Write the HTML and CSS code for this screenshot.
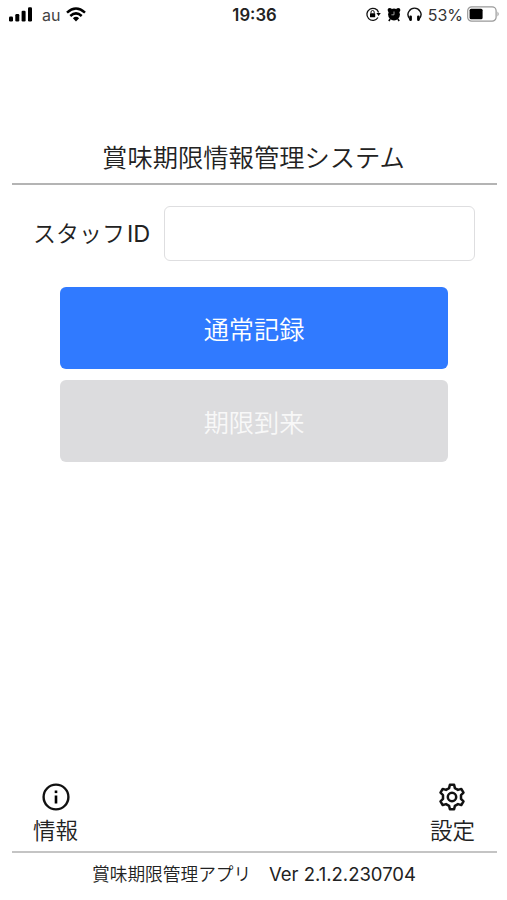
FILE: index.html
```html
<!DOCTYPE html>
<html lang="ja">
<head>
<meta charset="utf-8">
<title>賞味期限情報管理システム</title>
<link rel="stylesheet" href="styles.css">
</head>
<body>
<div class="screen">
  <header class="status">
    <div class="status-left">
      <svg class="signal" viewBox="0 0 24 15" width="24" height="15"><rect x="0" y="9.5" width="4" height="5" rx="1.2"/><rect x="6.3" y="7" width="4" height="7.5" rx="1.2"/><rect x="12.6" y="3.8" width="4" height="10.7" rx="1.2"/><rect x="19" y="0.3" width="4" height="14.2" rx="1.2"/></svg>
      <span class="carrier">au</span>
      <svg class="wifi" viewBox="0 0 20 15" width="20" height="15"><g fill="none" stroke="#000" stroke-width="2.5"><path d="M1 5.6Q10-2.6 19 5.6"/><path d="M4.3 9Q10 3.8 15.7 9"/></g><path d="M6.9 11.2Q10 8.5 13.1 11.2L10 14.5Z"/></svg>
    </div>
    <div class="clock">19:36</div>
    <div class="status-right">
      <svg viewBox="0 0 16 16" width="16" height="16"><path d="M13 11.5A6 6 0 1 1 13.6 6.5" fill="none" stroke="#111" stroke-width="1.3"/><path d="M11.4 7.1h4.4l-2.2 3z"/><rect x="5" y="7.2" width="5.2" height="4" rx=".5"/><path d="M6 7.5V6.1a1.6 1.6 0 0 1 3.2 0v1.4" fill="none" stroke="#111" stroke-width="1"/></svg>
      <svg viewBox="0 0 14 15" width="14" height="15"><circle cx="7" cy="7.5" r="5.9"/><circle cx="2.8" cy="3.1" r="2.2"/><circle cx="11.2" cy="3.1" r="2.2"/><path d="M3.2 12l-1.4 2M10.8 12l1.4 2" stroke="#000" stroke-width="1.5"/><path d="M7 4.5v3.3H4.4" fill="none" stroke="#aaa" stroke-width=".9"/></svg>
      <svg viewBox="0 0 15 15" width="15" height="15"><path d="M3.2 12.6C.5 9.6.6 6.2 2.1 4.1a6.4 6.4 0 0 1 10.8 0c1.5 2.1 1.6 5.5-1.1 8.5" fill="none" stroke="#111" stroke-width="1.4"/><rect x="2.3" y="8.5" width="2.6" height="5.5" rx="1.2"/><rect x="10.1" y="8.5" width="2.6" height="5.5" rx="1.2"/></svg>
      <span class="percent">53%</span>
      <svg class="battery" viewBox="0 0 33 16" width="33" height="16"><rect x=".7" y=".8" width="28.4" height="14.4" rx="4" fill="none" stroke="#999" stroke-width="1.2"/><rect x="2.6" y="2.8" width="13" height="10.4" rx="1.5"/><path d="M30.5 5.5q2.4 2.5 0 5z" fill="#999"/></svg>
    </div>
  </header>
  <h1 class="title">賞味期限情報管理システム</h1>
  <main class="form">
    <div class="field">
      <label for="staff">スタッフ<span class="latin">ID</span></label>
      <input id="staff" type="text">
    </div>
    <button class="action primary">通常記録</button>
    <button class="action disabled" disabled>期限到来</button>
  </main>
  <nav class="tools">
    <a class="tool"><svg viewBox="0 0 28 28" width="28" height="28"><circle cx="14" cy="14" r="12.4" fill="none" stroke="#111" stroke-width="2.4"/><rect x="12.7" y="12.5" width="2.6" height="8"/><rect x="12.7" y="7.5" width="2.6" height="2.6"/></svg><span>情報</span></a>
    <a class="tool"><svg viewBox="0 0 28 28" width="28" height="28"><g fill="none" stroke="#111" stroke-width="2.5" stroke-linejoin="round"><path d="M11.9 1.8h4.2l.8 3.3 3.1 1.8 3.3-1 2.2 3.8-2.5 2.4v3.8l2.5 2.4-2.2 3.8-3.3-1-3.1 1.8-.8 3.3h-4.2l-.8-3.3L8 21.1l-3.3 1-2.2-3.8L5 15.9v-3.8L2.5 9.7l2.2-3.8 3.3 1 3.1-1.8z"/><circle cx="14" cy="14" r="4.2"/></g></svg><span>設定</span></a>
  </nav>
  <footer class="footer">賞味期限管理アプリ　<span class="version">Ver 2.1.2.230704</span></footer>
</div>
</body>
</html>
```
FILE: styles.css
```css
* { box-sizing: border-box; }
body {
  margin: 0;
  background: #fff;
  color: #222;
  font-family: "Noto Sans CJK JP", sans-serif;
  font-weight: 350;
}
.screen {
  display: flex;
  flex-direction: column;
  height: 900px;
  padding: 0 11px 0 12px;
}
.status {
  display: grid;
  grid-template-columns: 1fr auto 1fr;
  align-items: center;
  height: 28px;
  margin: 0 -4px 0 -3px;
  font-family: Inter, sans-serif;
  font-weight: 400;
}
.status svg { display: block; }
.status-left, .status-right { display: flex; align-items: center; }
.carrier { margin: 0 6px 0 9px; padding-top: 1px; font-size: 16px; color: #444; }
.clock { padding-top: 1px; font-size: 16.7px; font-weight: 600; }
.status-right { justify-content: flex-end; gap: 6px; }
.percent { padding-top: 1px; font-size: 16px; color: #333; }
.battery { margin-left: -2px; }
.title {
  height: 157px;
  margin: 0 -1px 0 0;
  padding-top: 109px;
  border-bottom: 2px solid #b4b4b4;
  font-size: 25.3px;
  font-weight: 350;
  line-height: 38px;
  text-align: center;
  text-indent: -2px;
}
.form { display: flex; flex-direction: column; padding: 21px 48px 0; }
.field {
  display: flex;
  align-items: center;
  justify-content: space-between;
  height: 55px;
  margin: 0 -27px 26px;
}
.field label { padding-bottom: 3px; font-size: 23px; white-space: nowrap; }
.latin { margin-left: 2px; font-family: Inter, sans-serif; font-size: 23.5px; font-weight: 400; }
.field input {
  width: 311px;
  height: 55px;
  border: 1px solid #dedee0;
  border-radius: 6px;
  background: #fff;
  font-size: 23px;
}
.action {
  height: 82px;
  margin: 0 0 11px;
  padding: 0;
  border: 0;
  border-radius: 6px;
  color: #fff;
  font: 350 25.2px/82px "Noto Sans CJK JP", sans-serif;
}
.primary { background: #307aff; }
.disabled { background: #dcdcde; color: #f8f8f8; }
.tools {
  display: flex;
  justify-content: space-between;
  margin: auto -1px 0 0;
  padding: 0 22px 6px 21px;
  border-bottom: 2px solid #c4c4c4;
}
.tool { display: flex; flex-direction: column; align-items: center; font-size: 22.5px; line-height: 32px; }
.tool svg { display: block; margin-bottom: 2px; }
.footer {
  height: 47px;
  padding-top: 6px;
  font-size: 17.7px;
  line-height: 28px;
  text-align: center;
  white-space: nowrap;
}
.version { font-family: Inter, sans-serif; font-weight: 400; font-size: 18.5px; }
```
